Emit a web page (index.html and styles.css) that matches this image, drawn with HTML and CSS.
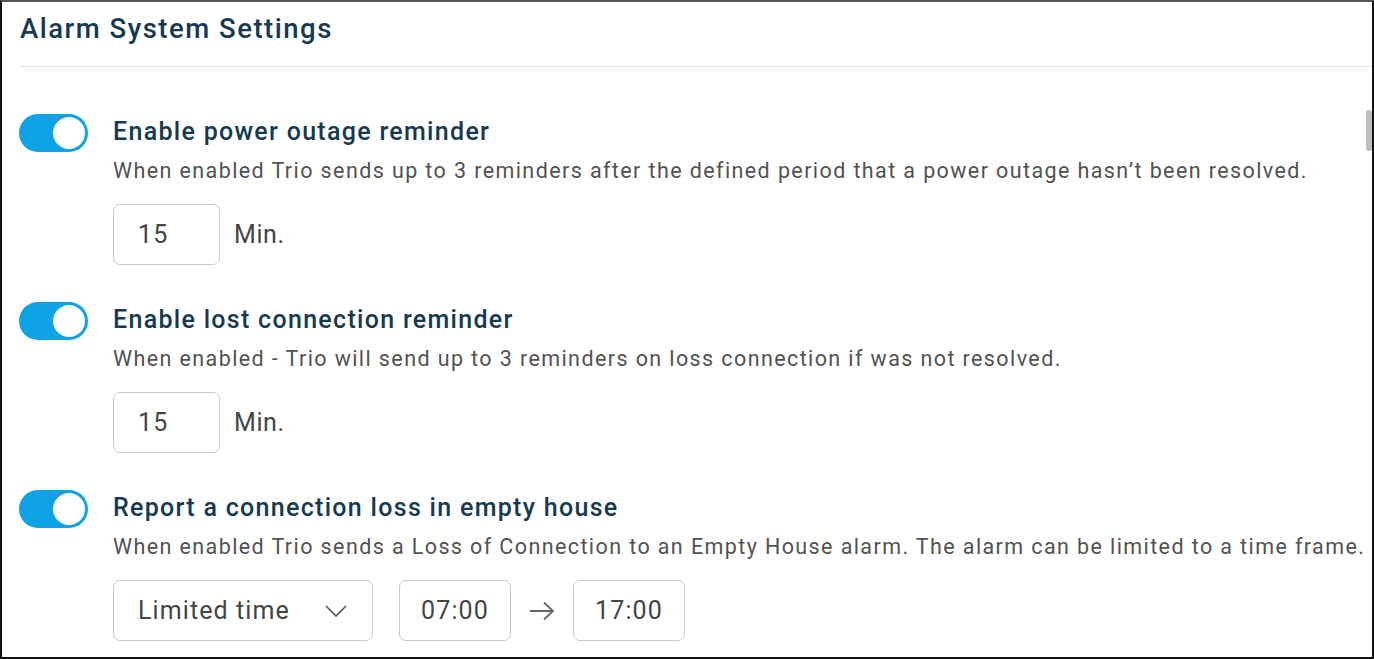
FILE: index.html
```html
<!DOCTYPE html>
<html>
<head>
<meta charset="utf-8">
<link rel="stylesheet" href="styles.css">
</head>
<body>
<div class="frame">
  <div class="header"><h1 class="page-title">Alarm System Settings</h1></div>
  <div class="scroll-thumb"></div>
  <div class="content">
    <div class="setting">
      <div class="toggle"><span class="knob"></span></div>
      <div class="setting-body">
        <div class="setting-title">Enable power outage reminder</div>
        <div class="setting-desc">When enabled Trio sends up to 3 reminders after the defined period that a power outage hasn’t been resolved.</div>
        <div class="controls">
          <div class="box num">15</div>
          <span class="unit">Min.</span>
        </div>
      </div>
    </div>
    <div class="setting">
      <div class="toggle"><span class="knob"></span></div>
      <div class="setting-body">
        <div class="setting-title">Enable lost connection reminder</div>
        <div class="setting-desc">When enabled - Trio will send up to 3 reminders on loss connection if was not resolved.</div>
        <div class="controls">
          <div class="box num">15</div>
          <span class="unit">Min.</span>
        </div>
      </div>
    </div>
    <div class="setting">
      <div class="toggle"><span class="knob"></span></div>
      <div class="setting-body">
        <div class="setting-title">Report a connection loss in empty house</div>
        <div class="setting-desc">When enabled Trio sends a Loss of Connection to an Empty House alarm. The alarm can be limited to a time frame.</div>
        <div class="controls">
          <div class="box select">
            <span>Limited time</span>
            <svg class="chevron" width="22" height="12" viewBox="0 0 22 12"><path d="M1 1 L11 11 L21 1" fill="none" stroke="#555" stroke-width="1.6"/></svg>
          </div>
          <div class="box time">07:00</div>
          <svg class="arrow" width="26" height="20" viewBox="0 0 26 20"><path d="M1 10 H24 M15 1.5 L24 10 L15 18.5" fill="none" stroke="#666" stroke-width="1.8"/></svg>
          <div class="box time">17:00</div>
        </div>
      </div>
    </div>
  </div>
</div>
</body>
</html>
```
FILE: styles.css
```css
html, body {
  margin: 0;
  padding: 0;
  background: #fff;
}
body {
  font-family: Roboto, "Liberation Sans", sans-serif;
}
.frame {
  position: relative;
  box-sizing: border-box;
  width: 1374px;
  height: 659px;
  border: 2px solid #111;
  border-top-color: #555;
  overflow: hidden;
  background: #fff;
}
.header {
  margin-left: 18px;
  padding-top: 8px;
  padding-bottom: 18px;
  border-bottom: 1px solid #e3e3e3;
}
.page-title {
  margin: 0;
  font-size: 27.5px;
  letter-spacing: 1.5px;
  line-height: 38px;
  font-weight: 500;
  color: #163a4f;
}
.scroll-thumb {
  position: absolute;
  right: 0;
  top: 108px;
  width: 6px;
  height: 41px;
  border-radius: 3px;
  background: #bdbdbd;
}
.content {
  padding: 49px 0 0 17px;
  display: flex;
  flex-direction: column;
  gap: 39px;
}
.setting {
  display: flex;
  align-items: flex-start;
  gap: 25px;
}
.toggle {
  flex: none;
  margin-top: -2px;
  width: 69px;
  height: 38px;
  border-radius: 19px;
  background: #0ea2e6;
  position: relative;
}
.knob {
  position: absolute;
  right: 3px;
  top: 3px;
  width: 32px;
  height: 32px;
  border-radius: 50%;
  background: #fff;
}
.setting-title {
  font-size: 25px;
  letter-spacing: 1.3px;
  line-height: 32px;
  font-weight: 500;
  color: #163a4f;
}
.setting-desc {
  margin-top: 8px;
  font-size: 21.5px;
  letter-spacing: 1.4px;
  line-height: 30px;
  color: #525252;
  white-space: nowrap;
}
.controls {
  margin-top: 18px;
  display: flex;
  align-items: center;
  gap: 14px;
}
.box {
  box-sizing: border-box;
  height: 61px;
  border: 1px solid #c9c9c9;
  border-radius: 7px;
  display: flex;
  align-items: center;
  font-size: 25px;
  letter-spacing: 1.1px;
  color: #444;
}
.num {
  width: 107px;
  padding-left: 24px;
}
.unit {
  font-size: 25px;
  letter-spacing: 0.6px;
  color: #444;
}
.select {
  width: 260px;
  padding: 0 25px 0 24px;
  justify-content: space-between;
  margin-right: 12px;
}
.time {
  width: 112px;
  justify-content: center;
}
.arrow {
  margin: 0 4px;
}
```
